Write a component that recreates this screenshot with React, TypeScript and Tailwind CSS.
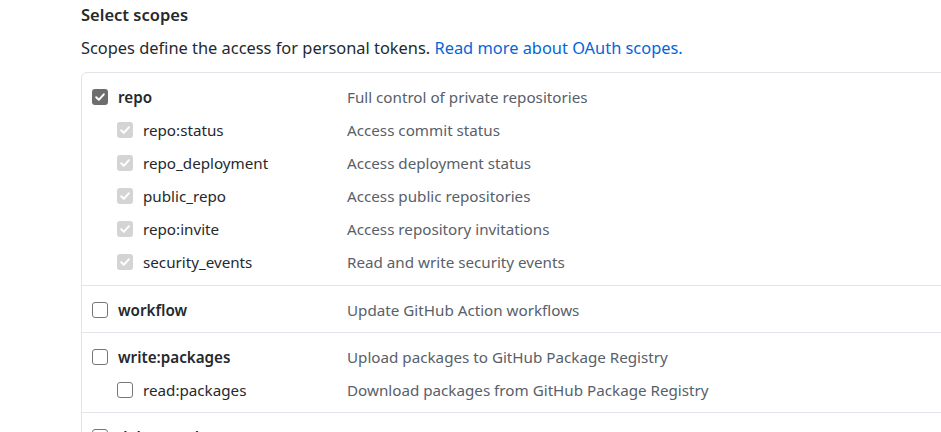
import React from "react";

type Scope = {
  name: string;
  desc: string;
  state: "checked" | "disabled" | "empty";
  sub?: boolean;
};

const groups: Scope[][] = [
  [
    { name: "repo", desc: "Full control of private repositories", state: "checked" },
    { name: "repo:status", desc: "Access commit status", state: "disabled", sub: true },
    { name: "repo_deployment", desc: "Access deployment status", state: "disabled", sub: true },
    { name: "public_repo", desc: "Access public repositories", state: "disabled", sub: true },
    { name: "repo:invite", desc: "Access repository invitations", state: "disabled", sub: true },
    { name: "security_events", desc: "Read and write security events", state: "disabled", sub: true },
  ],
  [{ name: "workflow", desc: "Update GitHub Action workflows", state: "empty" }],
  [
    { name: "write:packages", desc: "Upload packages to GitHub Package Registry", state: "empty" },
    { name: "read:packages", desc: "Download packages from GitHub Package Registry", state: "empty", sub: true },
  ],
  [{ name: "delete:packages", desc: "Delete packages from GitHub Package Registry", state: "empty" }],
];

const Box = ({ state }: { state: Scope["state"] }) => {
  if (state === "empty") {
    return <span className="w-4 h-4 shrink-0 rounded-[3px] border border-[#767676] bg-white" />;
  }
  return (
    <span
      className={
        state === "checked"
          ? "w-4 h-4 shrink-0 rounded-[3px] bg-[#6d6d6d] flex items-center justify-center"
          : "w-4 h-4 shrink-0 rounded-[3px] bg-[#d4d4d4] flex items-center justify-center"
      }
    >
      <svg width="12" height="12" viewBox="0 0 12 12" fill="none">
        <path d="M2.2 6.3 L4.8 8.8 L9.8 3.3" stroke="white" strokeWidth="2" strokeLinecap="round" strokeLinejoin="round" />
      </svg>
    </span>
  );
};

export default function App() {
  return (
    <div className="w-[941px] h-[432px] overflow-hidden bg-white pl-[81px] pt-[3px] text-[#24292e] font-['Noto_Sans',sans-serif]">
      <h3 className="text-[16.5px] font-semibold leading-[24px]">Select scopes</h3>
      <p className="mt-[9px] text-[16.4px] leading-[24px] text-[#24292e]">
        Scopes define the access for personal tokens.{" "}
        <a className="text-[#0366d6]">Read more about OAuth scopes.</a>
      </p>
      <div className="mt-[12px] w-[900px] border border-[#e1e4e8] rounded-[6px]">
        {groups.map((g, i) => (
          <div key={i} className={i === 0 ? "pt-[8px] pb-[6px]" : "pt-[8px] pb-[5px] border-t border-[#e1e4e8]"}>
            {g.map((s) => (
              <div key={s.name} className="h-[33px] flex items-center text-[15.2px]">
                <div className={s.sub ? "w-[265px] pl-[35px] flex items-center gap-[10px]" : "w-[265px] pl-[10px] flex items-center gap-[10px]"}>
                  <Box state={s.state} />
                  <span className={s.sub ? "text-[#24292e]" : "font-semibold text-[#24292e]"}>{s.name}</span>
                </div>
                <span className="text-[#586069]">{s.desc}</span>
              </div>
            ))}
          </div>
        ))}
      </div>
    </div>
  );
}
